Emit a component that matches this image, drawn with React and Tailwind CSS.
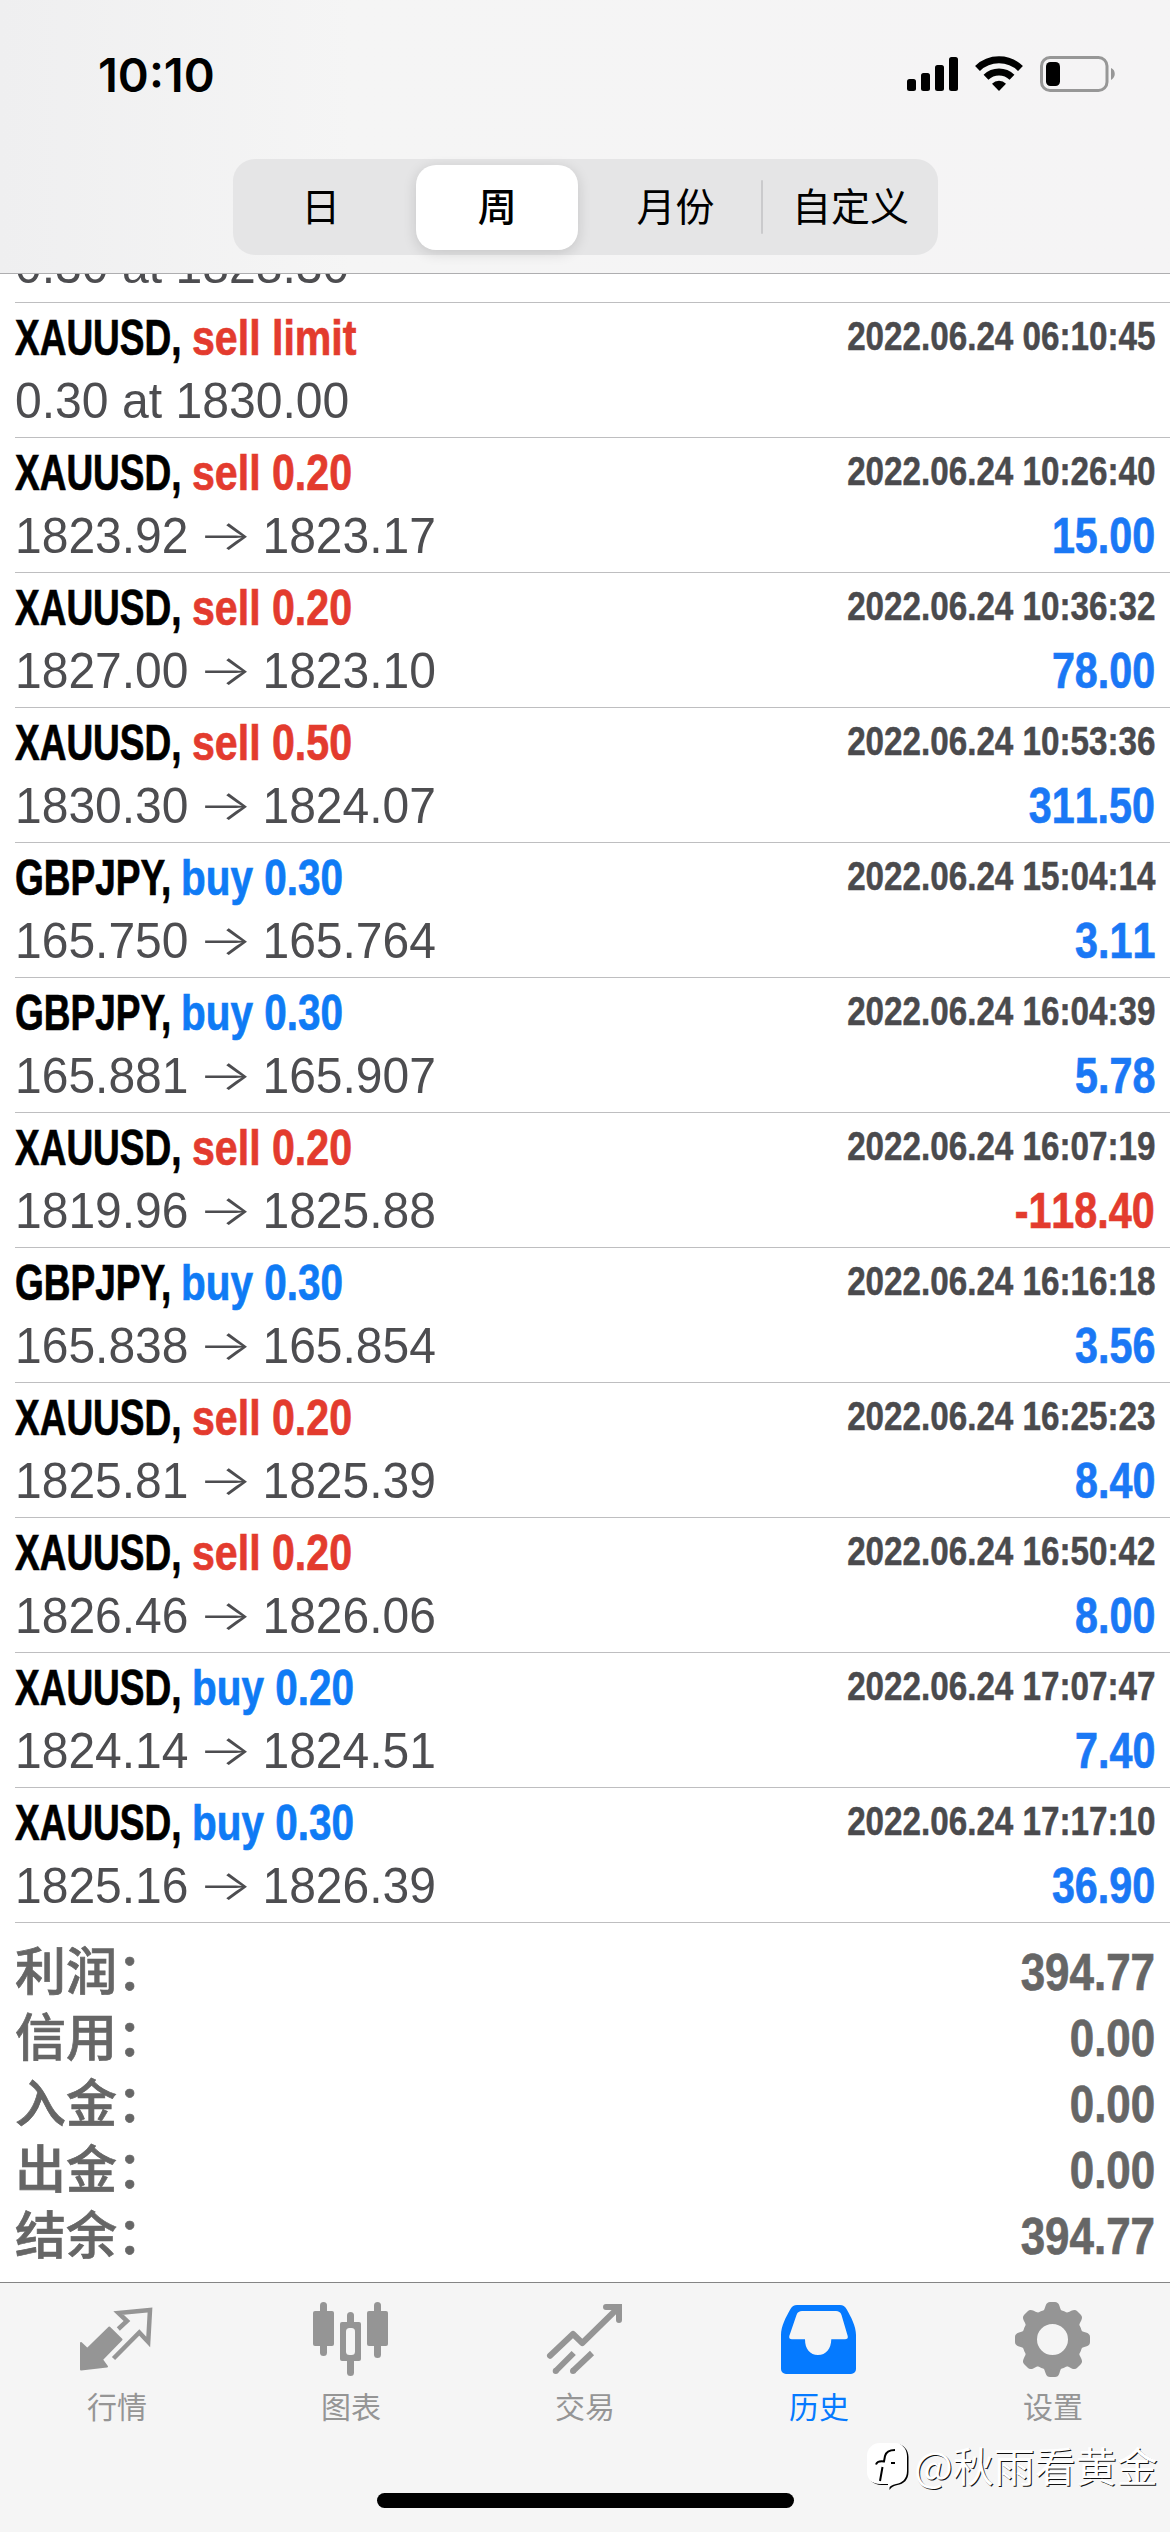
import React from "react";

const trades = [
  { symbol: "XAUUSD", side: "sell", size: "limit", time: "2022.06.24 06:10:45", order: "0.30 at 1830.00" },
  { symbol: "XAUUSD", side: "sell", size: "0.20", time: "2022.06.24 10:26:40", open: "1823.92", close: "1823.17", profit: "15.00" },
  { symbol: "XAUUSD", side: "sell", size: "0.20", time: "2022.06.24 10:36:32", open: "1827.00", close: "1823.10", profit: "78.00" },
  { symbol: "XAUUSD", side: "sell", size: "0.50", time: "2022.06.24 10:53:36", open: "1830.30", close: "1824.07", profit: "311.50" },
  { symbol: "GBPJPY", side: "buy", size: "0.30", time: "2022.06.24 15:04:14", open: "165.750", close: "165.764", profit: "3.11" },
  { symbol: "GBPJPY", side: "buy", size: "0.30", time: "2022.06.24 16:04:39", open: "165.881", close: "165.907", profit: "5.78" },
  { symbol: "XAUUSD", side: "sell", size: "0.20", time: "2022.06.24 16:07:19", open: "1819.96", close: "1825.88", profit: "-118.40" },
  { symbol: "GBPJPY", side: "buy", size: "0.30", time: "2022.06.24 16:16:18", open: "165.838", close: "165.854", profit: "3.56" },
  { symbol: "XAUUSD", side: "sell", size: "0.20", time: "2022.06.24 16:25:23", open: "1825.81", close: "1825.39", profit: "8.40" },
  { symbol: "XAUUSD", side: "sell", size: "0.20", time: "2022.06.24 16:50:42", open: "1826.46", close: "1826.06", profit: "8.00" },
  { symbol: "XAUUSD", side: "buy", size: "0.20", time: "2022.06.24 17:07:47", open: "1824.14", close: "1824.51", profit: "7.40" },
  { symbol: "XAUUSD", side: "buy", size: "0.30", time: "2022.06.24 17:17:10", open: "1825.16", close: "1826.39", profit: "36.90" },
];

const totals = [
  { label: "利润", value: "394.77" },
  { label: "信用", value: "0.00" },
  { label: "入金", value: "0.00" },
  { label: "出金", value: "0.00" },
  { label: "结余", value: "394.77" },
];

const symbolWidth = {
  XAUUSD: "w-[177px]",
  GBPJPY: "w-[166px]",
};

const StatusBar = () => (
  <div className="flex h-[159px] items-start justify-between pl-[98px] pr-[54px]">
    <span className="mt-[46px] font-['Inter',sans-serif] text-[47px] leading-[57px] font-semibold text-black">
      10:10
    </span>
    <svg className="mt-[54px] h-10 w-[210px]" viewBox="906 54 210 40">
      <rect x="907" y="79" width="9" height="12" rx="2.5" />
      <rect x="921" y="73" width="9" height="18" rx="2.5" />
      <rect x="935" y="65" width="9" height="26" rx="2.5" />
      <rect x="949" y="57" width="9" height="34" rx="2.5" />
      <g fill="none" stroke="#000" strokeWidth="7">
        <path d="M977.500 68.500a31 31 0 0 1 43 0" />
        <path d="M986 77.300a18.700 18.700 0 0 1 26 0" />
      </g>
      <path d="M999 91l-7-7.300a10 10 0 0 1 14 0z" />
      <rect x="1041.500" y="57.500" width="65.500" height="33" rx="8.500" fill="none" stroke="#979797" strokeWidth="3" />
      <rect x="1046" y="62" width="14" height="24" rx="4.500" />
      <path d="M1111 68c5 2 5 9.500 0 12z" fill="#979797" />
    </svg>
  </div>
);

const PeriodTabs = () => (
  <div className="mx-auto flex h-24 w-[705px] items-center rounded-[22px] bg-[#e5e5e6] font-['Noto_Sans_CJK_SC',sans-serif] text-[39px] leading-[58px] text-black">
    <div className="flex-1 pb-1.5 text-center">日</div>
    <div className="flex flex-1 justify-center">
      <div className="flex h-[85px] w-[162px] items-center justify-center rounded-[20px] bg-white pb-1.5 font-medium shadow-[0_3px_14px_rgba(0,0,0,0.14)]">
        周
      </div>
    </div>
    <div className="w-[176px] pb-1.5 pl-1 text-center">月份</div>
    <div className="-mx-px h-[54px] w-0.5 rounded-full bg-[#cacacc]" />
    <div className="w-[176px] pb-1.5 pl-0.5 text-center">自定义</div>
  </div>
);

const Arrow = () => (
  <span className="-mt-0.5 flex w-[77px] justify-center font-['Inter',sans-serif] text-[42px] font-light">
    <span className="scale-x-[1.42]">→</span>
  </span>
);

const TradeRow = ({ trade }) => {
  const sideColor =
    trade.side === "sell" ? "scale-x-[0.822] text-[#e33b2e]" : "scale-x-[0.81] text-[#0f7bf5]";
  const profitColor = trade.profit?.startsWith("-") ? "text-[#e33b2e]" : "text-[#1a78f5]";

  return (
    <div className="ml-[15px] flex h-[135px] shrink-0 flex-col border-b border-[#bebec0] pr-[15px] whitespace-nowrap">
      <div className="mt-[7px] flex h-[57px] items-center justify-between">
        <div className="flex text-[50px] leading-[57px] font-bold [-webkit-text-stroke:0.7px]">
          <div className={symbolWidth[trade.symbol]}>
            <span className="inline-block origin-left scale-x-[0.74] text-black">{trade.symbol},</span>
          </div>
          <span className={`origin-left ${sideColor}`}>
            {trade.side} {trade.size}
          </span>
        </div>
        <span className="origin-right scale-x-[0.83] pb-1.5 text-[40px] leading-[46px] font-bold text-[#4a4a4d] [-webkit-text-stroke:0.5px]">
          {trade.time}
        </span>
      </div>
      <div className="mt-1.5 flex h-[57px] justify-between text-[50px] leading-[57px]">
        {trade.order ? (
          <span className="origin-left scale-x-[0.962] text-[#4d4d50]">{trade.order}</span>
        ) : (
          <>
            <span className="flex origin-left scale-x-[0.96] text-[#4d4d50]">
              {trade.open}
              <Arrow />
              {trade.close}
            </span>
            <span
              className={`origin-right scale-x-[0.825] font-bold [font-kerning:none] [-webkit-text-stroke:0.7px] ${profitColor}`}
            >
              {trade.profit}
            </span>
          </>
        )}
      </div>
    </div>
  );
};

const Totals = () => (
  <div className="h-[359px] shrink-0 px-[15px] pt-4 font-bold text-[#666666] [-webkit-text-stroke:0.7px]">
    {totals.map((item) => (
      <div key={item.label} className="flex h-[66px] items-center justify-between">
        <span className="pb-2 font-['Noto_Sans_CJK_SC',sans-serif] text-[51px] leading-[58px] font-medium">
          {item.label}：
        </span>
        <span className="origin-right scale-x-[0.845] text-[52px] leading-[64px]">{item.value}</span>
      </div>
    ))}
  </div>
);

const QuotesIcon = () => (
  <svg className="size-[78px]" viewBox="0 0 78 78" fill="none" stroke="currentColor">
    <path d="M3 43l6.300 6L31.300 27.500 43.500 39.500 24 59.500l5 7L3 69.500z" fill="currentColor" strokeWidth="2" strokeLinejoin="round" />
    <path d="M40.300 29l8.700-8-8.500-8L72 10l-1.800 32-8.900-9.500L35.500 58.500" strokeWidth="4.500" />
  </svg>
);

const ChartIcon = () => (
  <svg className="size-[78px]" viewBox="0 0 78 78" fill="currentColor">
    <rect x="1" y="11" width="21" height="35" rx="2" />
    <rect x="8" y="2" width="7" height="54" rx="3.500" />
    <rect x="35" y="12" width="7" height="64" rx="3.500" />
    <rect x="28" y="22" width="21" height="39" rx="2" />
    <rect x="34" y="28" width="9" height="27" rx="3.500" fill="#f5f5f5" />
    <rect x="55" y="11" width="21" height="35" rx="2" />
    <rect x="62" y="2" width="7" height="56" rx="3.500" />
  </svg>
);

const TradeIcon = () => (
  <svg className="size-[78px]" viewBox="0 0 78 78" fill="none" stroke="currentColor" strokeWidth="6">
    <path d="M4 55.700L27 34l9.300 9L71 9" strokeLinecap="round" strokeLinejoin="round" />
    <path d="M60 7h13v13" strokeLinecap="round" />
    <path d="M9.700 71l18-18M27 71l19-18" />
    <path d="M9.700 71h.01M27 71h.01" strokeLinecap="round" />
  </svg>
);

const HistoryIcon = () => (
  <svg className="size-[78px]" viewBox="0 0 78 78" fill="currentColor">
    <path
      fillRule="evenodd"
      d="M17 5h43c3 0 5 1.500 6.500 4C71 17 76 26 76 35v34a5 5 0 0 1-5 5H6a5 5 0 0 1-5-5V35C1 26 6 17 10.500 9 12 6.500 14 5 17 5zM22 11c-2.500 0-4.500 1-5.500 4L9.300 36c-.5 2 .5 3.300 2.700 3.300h13c0 10 5 15.700 13 15.700s13-5.700 13.300-15.700H65c2.200 0 3.300-1.300 2.700-3.300L61.500 15c-1-3-3-4-5.500-4z"
    />
  </svg>
);

const SettingsIcon = () => (
  <svg className="size-[78px]" viewBox="0 0 78 78" fill="currentColor">
    {[0, 45, 90, 135, 180, 225, 270, 315].map((angle) => (
      <path
        key={angle}
        transform={`rotate(${angle} 38.500 39.500)`}
        d="M24 14c5-1 6-3 7.500-8C32.500 3 34 2 36 2h5c2 0 3.500 1 4.500 4 1.500 5 2.500 7 7.500 8z"
      />
    ))}
    <circle cx="38.500" cy="39.500" r="23" fill="none" stroke="currentColor" strokeWidth="15" />
  </svg>
);

const navItems = [
  { label: "行情", Icon: QuotesIcon },
  { label: "图表", Icon: ChartIcon },
  { label: "交易", Icon: TradeIcon },
  { label: "历史", Icon: HistoryIcon, active: true },
  { label: "设置", Icon: SettingsIcon },
];

const TabBar = () => (
  <div className="flex h-[250px] flex-col items-center border-t border-[#858585] bg-[#f5f5f5]">
    <div className="flex h-[210px] w-full pt-[17px]">
      {navItems.map(({ label, Icon, active }) => (
        <div
          key={label}
          className={`flex flex-1 flex-col items-center ${active ? "text-[#057aff]" : "text-[#959595]"}`}
        >
          <Icon />
          <span className="mt-[5px] font-['Noto_Sans_CJK_SC',sans-serif] text-[30px] leading-[44px]">{label}</span>
        </div>
      ))}
    </div>
    <div className="h-[15px] w-[417px] rounded-full bg-black" />
  </div>
);

const Watermark = () => (
  <div className="absolute top-[2434px] left-[867px] flex items-center gap-1">
    <svg className="mt-1.5 h-[50px] w-[43px]" viewBox="0 0 43 50">
      <path d="M13 1h15c7 0 12 6 12 13v15c0 8-5 12-11 13-4 1-6 2-8 5v-5h-8C5 42 0 37 0 30V14C0 7 5 1 13 1z" fill="#000" transform="translate(1.500 1)" />
      <path d="M13 1h15c7 0 12 6 12 13v15c0 8-5 12-11 13-4 1-6 2-8 5v-5h-8C5 42 0 37 0 30V14C0 7 5 1 13 1z" fill="#fff" />
      <path d="M28 8c-6 0-9 2-10 6l-1 5.500c-4-.5-7 0-8 3M15.500 25L13 39M24 21h4" fill="none" stroke="#000" strokeWidth="2" />
    </svg>
    <span className="font-['Noto_Sans_CJK_SC',sans-serif] text-[41px] leading-[60px] text-white [text-shadow:1px_1px_0_#111]">
      @秋雨看黄金
    </span>
  </div>
);

const App = () => {
  return (
    <div className="relative flex h-[2532px] w-[1170px] flex-col overflow-hidden bg-white font-['Liberation_Sans',Arial,sans-serif]">
      <div className="h-[274px] shrink-0 border-b border-[#aeaeb0] bg-linear-to-r from-[#efeff0] via-[#f5f5f5] via-30% to-[#f5f4f5]">
        <StatusBar />
        <PeriodTabs />
      </div>
      {/* older order, mostly scrolled under the header */}
      <div className="ml-[15px] flex h-[29px] shrink-0 items-end overflow-hidden border-b border-[#bebec0] pb-[7px]">
        <span className="origin-left scale-x-[0.962] text-[50px] leading-[57px] text-[#4d4d50]">0.30 at 1828.30</span>
      </div>
      {trades.map((trade) => (
        <TradeRow key={trade.time} trade={trade} />
      ))}
      <Totals />
      <TabBar />
      <Watermark />
    </div>
  );
};

export default App;
